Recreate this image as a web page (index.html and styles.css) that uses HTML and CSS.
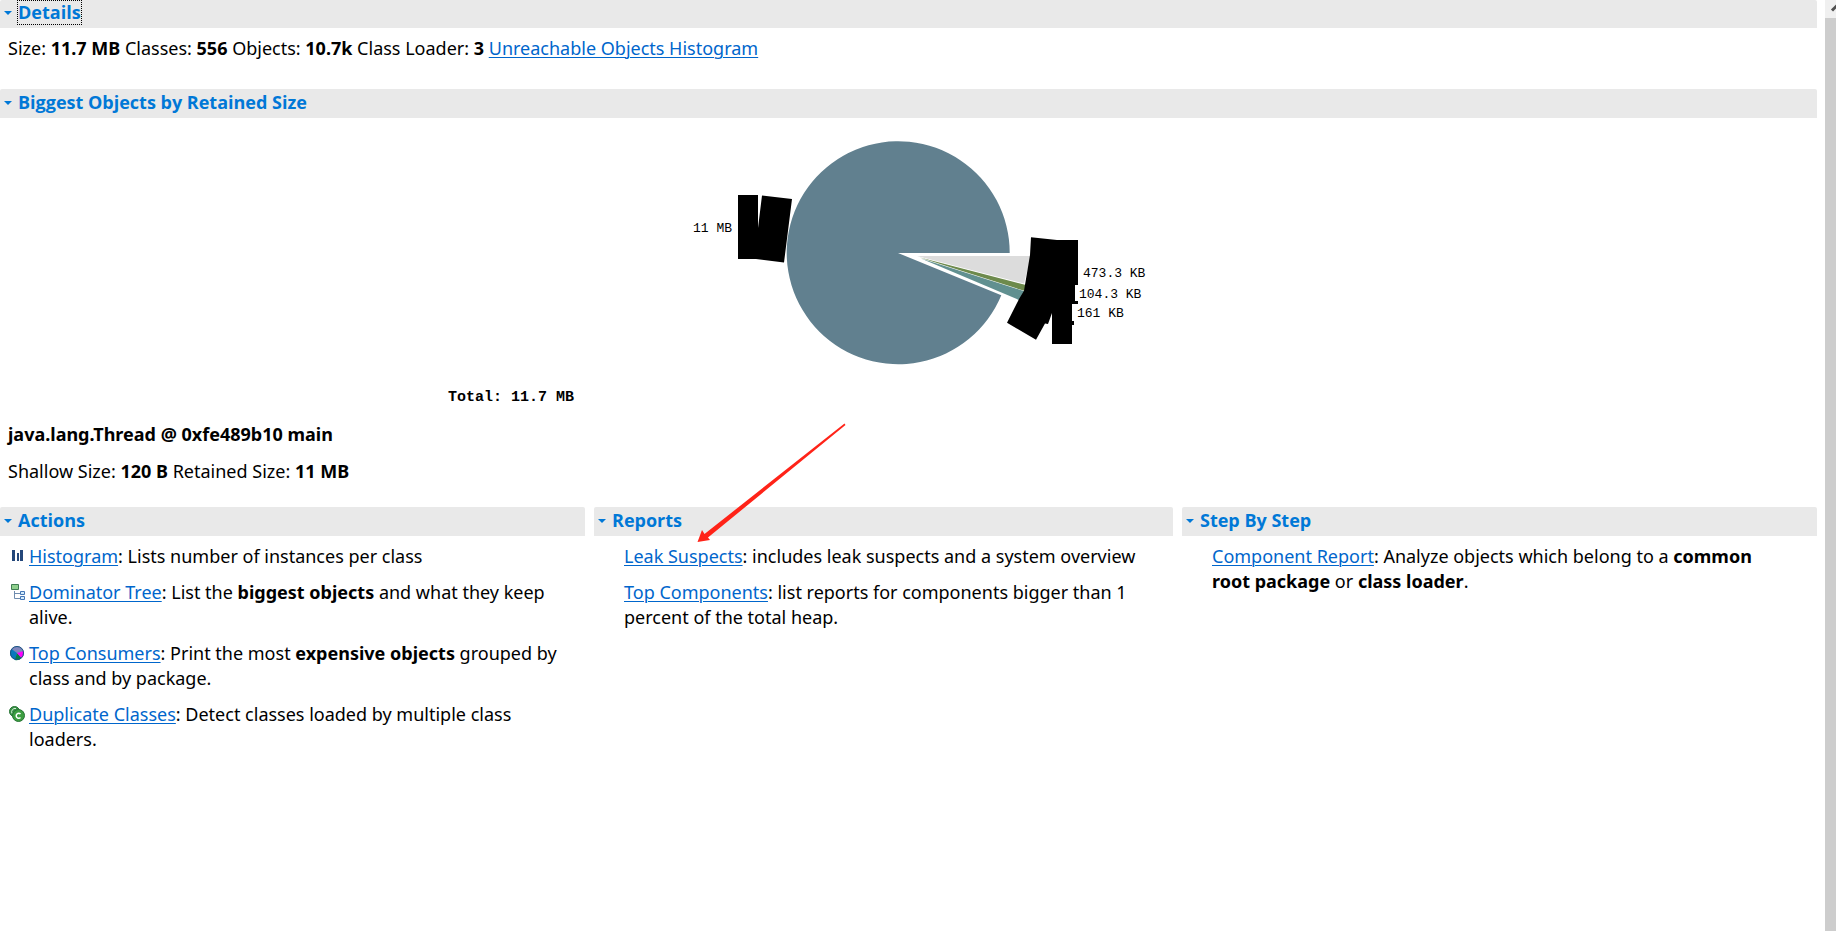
FILE: index.html
```html
<!DOCTYPE html>
<html lang="en">
<head>
<meta charset="utf-8">
<title>Heap Overview</title>
<link rel="stylesheet" href="styles.css">
</head>
<body>
<main class="content">
  <section class="section-details">
    <h2 class="bar"><button class="toggle toggle-focused" type="button"><span class="caret"></span><span class="label">Details</span></button></h2>
    <p class="summary">Size: <b>11.7 MB</b> Classes: <b>556</b> Objects: <b>10.7k</b> Class Loader: <b>3</b> <a href="#">Unreachable Objects Histogram</a></p>
  </section>
  <section>
    <h2 class="bar"><button class="toggle" type="button"><span class="caret"></span><span class="label">Biggest Objects by Retained Size</span></button></h2>
    <svg class="chart" viewBox="0 118 1817 296" role="img" aria-label="Biggest objects by retained size">
      <path fill="#61808f" d="M898 253H1009.700A111.500 111.500 0 1 0 1001.300 295.200Z"/>
      <path fill="#dcdcdc" d="M917 256H1031L1024 283.500Z"/>
      <path fill="#6d8a4c" d="M919 257.300L1025 284.800V291Z"/>
      <path fill="#619090" d="M921 258.600L1025 291.400L1019 300Z"/>
      <path d="M738 195H758V228L762 195.500L792 199L784 262.500L756 259H738Z"/>
      <path d="M1031 237.300L1057 240H1078V285H1075V301H1078V304H1072V321H1074V325H1072V344H1052V313L1048 324L1045 323.500L1036 339.700L1007 322.700L1019 299L1024 290.700L1027 273L1030 255Z"/>
      <g class="chart-label">
        <text x="693" y="232">11 MB</text>
        <text x="1083" y="277">473.3 KB</text>
        <text x="1079" y="298">104.3 KB</text>
        <text x="1077" y="317">161 KB</text>
      </g>
      <text class="chart-total" x="448" y="401">Total: 11.7 MB</text>
    </svg>
    <div class="object-info">
      <p><b>java.lang.Thread @ 0xfe489b10 main</b></p>
      <p>Shallow Size: <b>120 B</b> Retained Size: <b>11 MB</b></p>
    </div>
  </section>
  <div class="columns">
    <section>
      <h2 class="bar"><button class="toggle" type="button"><span class="caret"></span><span class="label">Actions</span></button></h2>
      <ul class="list actions">
        <li><svg class="icon" viewBox="0 0 16 16"><path fill="#24477a" d="M2 2h3v11H2zM7 5h2v8H7zM10 2h3v11h-3z"/></svg>
          <span><a href="#">Histogram</a>: Lists number of instances per class</span></li>
        <li><svg class="icon" viewBox="0 0 16 16"><path d="M4.500 7v7.500H10M4.500 9.500H10" fill="none" stroke="#6f8cae"/><path fill="#8fd08d" stroke="#3f7d52" d="M1.500.500h7v5h-7z"/><path fill="#d4ecfb" stroke="#4576b5" d="M10.500 7.500h4v3h-4zM10.500 12.500h4v3h-4z"/></svg>
          <span><a href="#">Dominator Tree</a>: List the <b>biggest objects</b> and what they keep alive.</span></li>
        <li><svg class="icon" viewBox="0 0 16 16"><circle cx="7" cy="8" r="7" fill="#8086bd"/><path fill="#0878bd" d="M7 8L1.500 4A7 7 0 0 0 6 15Z"/><path fill="#067b49" d="M7 8L5 15A7 7 0 0 0 11.500 13Z"/><path fill="#f0f" d="M7 8L13.500 6A7 7 0 0 1 11.500 13Z"/><circle cx="7" cy="8" r="6.500" fill="none" stroke="#175680"/></svg>
          <span><a href="#">Top Consumers</a>: Print the most <b>expensive objects</b> grouped by class and by package.</span></li>
        <li><svg class="icon" viewBox="1 0 16 16"><circle cx="5.500" cy="5.500" r="5" fill="#3b9248" stroke="#267434"/><path d="M3 7.500A3.500 3.500 0 0 1 7 2.500" fill="none" stroke="#d6efd7"/><circle cx="9.500" cy="9.500" r="6" fill="#3c9e40" stroke="#267434"/><path d="M11.500 8A2.500 2.500 0 1 0 11.500 11.500" fill="none" stroke="#fff" stroke-width="1.500"/></svg>
          <span><a href="#">Duplicate Classes</a>: Detect classes loaded by multiple class loaders.</span></li>
      </ul>
    </section>
    <section class="reports">
      <h2 class="bar"><button class="toggle" type="button"><span class="caret"></span><span class="label">Reports</span></button></h2>
      <ul class="list">
        <li><span><a href="#">Leak Suspects</a>: includes leak suspects and a system overview</span></li>
        <li><span><a href="#">Top Components</a>: list reports for components bigger than 1 percent of the total heap.</span></li>
      </ul>
      <svg class="arrow" viewBox="0 0 150 120" aria-hidden="true"><path fill="#ff2318" d="M.5 119L5 107L7.500 111L147.500 .5L148.500 2L11 114.500L13 117Z"/></svg>
    </section>
    <section class="steps">
      <h2 class="bar"><button class="toggle" type="button"><span class="caret"></span><span class="label">Step By Step</span></button></h2>
      <ul class="list">
        <li><span><a href="#">Component Report</a>: Analyze objects which belong to a <b>common root package</b> or <b>class loader</b>.</span></li>
      </ul>
    </section>
  </div>
</main>
<aside class="scrollbar" aria-hidden="true">
  <svg class="scroll-up" viewBox="0 0 11 18"><path d="M7 10.500L12.500 5" fill="none" stroke="#505050" stroke-width="3"/></svg>
</aside>
</body>
</html>
```
FILE: styles.css
```css
* { box-sizing: border-box; }

body {
  margin: 0;
  min-height: 100vh;
  display: flex;
  gap: 8px;
  background: #fff;
  color: #000;
  font: 18px/25px "Noto Sans", "Open Sans", sans-serif;
}

p, h2, ul { margin: 0; padding: 0; }
b { font-weight: 700; }
a { color: #0066cc; text-decoration: underline; text-decoration-thickness: 1px; text-underline-offset: 2px; }

.content { flex: 1; min-width: 0; }

.bar {
  height: 29px;
  background: #e9e9e9;
  border-radius: 2px 2px 0 0;
  font-family: "Open Sans", "Noto Sans", sans-serif;
  font-size: 18px;
}

.toggle {
  display: flex;
  align-items: center;
  gap: 6px;
  height: 27px;
  padding: 0 0 0 4px;
  border: 0;
  background: none;
  color: #0078d7;
  font: inherit;
  line-height: 23px;
}
.toggle-focused { height: 25px; }
.toggle-focused .label { outline: 1px dotted #000; }

.caret {
  border: 4px solid transparent;
  border-top-color: #0078d7;
  border-bottom: 0;
}

.section-details .bar { height: 28px; }
.summary { padding: 8px 8px 28px; }

.chart { display: block; width: 100%; height: auto; }
.chart-label { font: 13px "Liberation Mono", monospace; }
.chart-total { font: bold 15px "Liberation Mono", monospace; }

.object-info {
  display: grid;
  gap: 12px;
  padding: 8px 8px 23px;
}

.columns {
  display: grid;
  grid-template-columns: 585fr 579fr 635fr;
  gap: 9px;
}

.list {
  display: grid;
  gap: 11px;
  padding: 8px 8px 0 30px;
  list-style: none;
}
.actions { padding-left: 10px; }
.actions li { display: flex; gap: 3px; }
.steps .list { padding-right: 40px; }
.icon { flex: none; width: 16px; height: 16px; margin-top: 4px; overflow: visible; }

.reports { position: relative; }
.arrow {
  position: absolute;
  left: 103px;
  top: -84px;
  width: 150px;
  height: 120px;
  pointer-events: none;
}

.scrollbar { width: 11px; background: #cdcdcd; }
.scroll-up { display: block; width: 11px; height: 18px; background: #f0f0f0; }
```
